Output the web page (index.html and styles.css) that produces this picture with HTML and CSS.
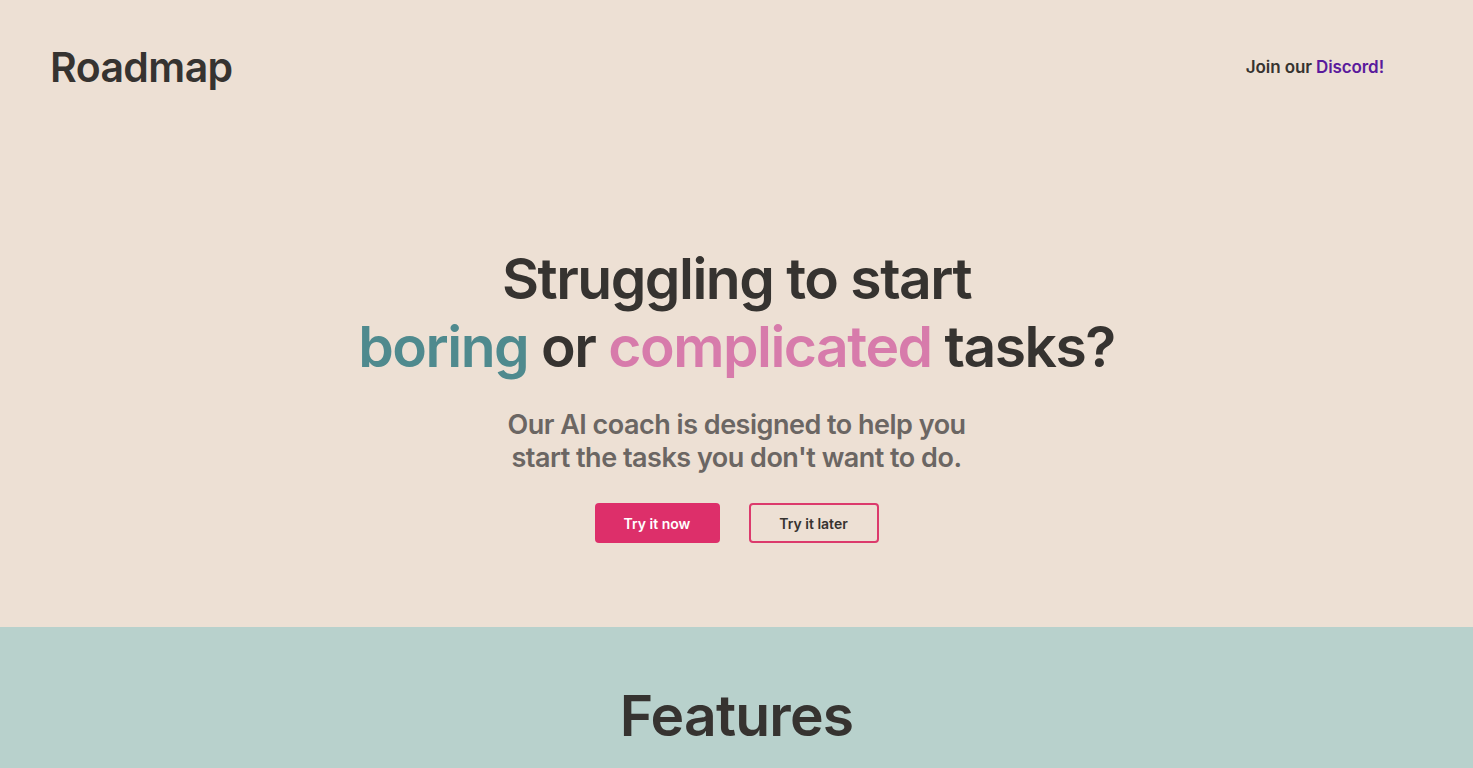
FILE: index.html
```html
<!DOCTYPE html>
<html lang="en">
<head>
  <meta charset="UTF-8">
  <title>Roadmap</title>
  <link rel="stylesheet" href="styles.css">
</head>
<body>
<div class="hero">
  <div class="header">
    <div class="logo">Roadmap</div>
    <div class="nav">Join our <a href="#" class="discord">Discord!</a></div>
  </div>
  <div class="intro">
    <h1 class="title">
      Struggling to start<br>
      <span class="boring">boring</span> or <span class="complicated">complicated</span> tasks?
    </h1>
    <p class="lead">Our AI coach is designed to help you<br>start the tasks you don't want to do.</p>
    <div class="actions">
      <a href="#" class="btn btn-now">Try it now</a>
      <a href="#" class="btn btn-later">Try it later</a>
    </div>
  </div>
</div>
<div class="features">
  <h2 class="features-title">Features</h2>
</div>
</body>
</html>
```

FILE: styles.css
```css
body, h1, h2, p {
  margin: 0;
  padding: 0;
}

body {
  font-family: Inter, "Noto Sans", sans-serif;
  color: #363330;
  background: #b8d1cc;
}

a {
  text-decoration: none;
}

.hero {
  height: 627px;
  background: #ede0d4;
}

.header {
  height: 133px;
  padding: 0 89px 0 50px;
  display: flex;
  align-items: center;
  justify-content: space-between;
}

.logo {
  font-size: 41px;
  font-weight: 600;
  letter-spacing: -0.6px;
}

.nav {
  font-size: 17px;
  font-weight: 600;
  letter-spacing: -0.1px;
}

.discord {
  color: #5a1a9c;
}

.intro {
  padding-top: 112px;
  text-align: center;
}

.title {
  font-size: 57px;
  font-weight: 600;
  line-height: 68px;
  letter-spacing: -1.5px;
}

.boring {
  color: #4f8a8e;
}

.complicated {
  color: #d77bab;
}

.lead {
  margin-top: 27px;
  font-size: 27px;
  font-weight: 600;
  line-height: 33px;
  letter-spacing: -0.5px;
  color: #6b6663;
}

.actions {
  margin-top: 29px;
  display: flex;
  justify-content: center;
  gap: 29px;
}

.btn {
  height: 40px;
  box-sizing: border-box;
  border-radius: 4px;
  font-size: 14px;
  font-weight: 600;
  display: flex;
  align-items: center;
  justify-content: center;
}

.btn-now {
  width: 125px;
  background: #dd2f6a;
  color: #fff;
}

.btn-later {
  width: 130px;
  border: 2px solid #dc3a6c;
  color: #363330;
}

.features {
  padding-top: 54px;
  text-align: center;
}

.features-title {
  font-size: 57px;
  font-weight: 600;
  letter-spacing: -0.8px;
}
```
